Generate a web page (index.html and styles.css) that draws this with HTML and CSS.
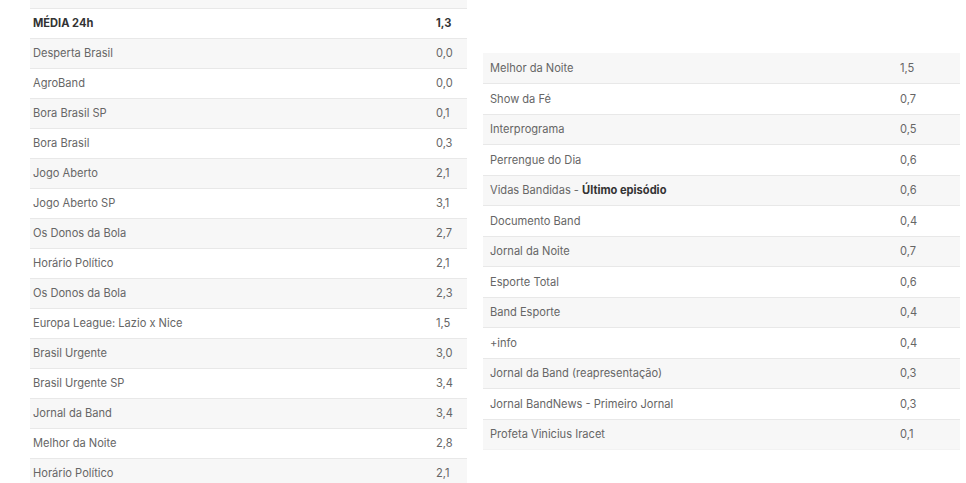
FILE: index.html
```html
<!DOCTYPE html>
<html lang="pt-BR">
<head>
<meta charset="utf-8">
<title>Audiência Band</title>
<link rel="stylesheet" href="styles.css">
</head>
<body>
<div class="page">
  <table class="ratings left">
    <tbody>
      <tr class="stub"><td></td><td></td></tr>
      <tr class="head"><td>MÉDIA 24h</td><td>1,3</td></tr>
      <tr><td>Desperta Brasil</td><td>0,0</td></tr>
      <tr><td>AgroBand</td><td>0,0</td></tr>
      <tr><td>Bora Brasil SP</td><td>0,1</td></tr>
      <tr><td>Bora Brasil</td><td>0,3</td></tr>
      <tr><td>Jogo Aberto</td><td>2,1</td></tr>
      <tr><td>Jogo Aberto SP</td><td>3,1</td></tr>
      <tr><td>Os Donos da Bola</td><td>2,7</td></tr>
      <tr><td>Horário Político</td><td>2,1</td></tr>
      <tr><td>Os Donos da Bola</td><td>2,3</td></tr>
      <tr><td>Europa League: Lazio x Nice</td><td>1,5</td></tr>
      <tr><td>Brasil Urgente</td><td>3,0</td></tr>
      <tr><td>Brasil Urgente SP</td><td>3,4</td></tr>
      <tr><td>Jornal da Band</td><td>3,4</td></tr>
      <tr><td>Melhor da Noite</td><td>2,8</td></tr>
      <tr><td>Horário Político</td><td>2,1</td></tr>
    </tbody>
  </table>
  <table class="ratings right">
    <tbody>
      <tr><td>Melhor da Noite</td><td>1,5</td></tr>
      <tr><td>Show da Fé</td><td>0,7</td></tr>
      <tr><td>Interprograma</td><td>0,5</td></tr>
      <tr><td>Perrengue do Dia</td><td>0,6</td></tr>
      <tr><td>Vidas Bandidas - <strong>Último episódio</strong></td><td>0,6</td></tr>
      <tr><td>Documento Band</td><td>0,4</td></tr>
      <tr><td>Jornal da Noite</td><td>0,7</td></tr>
      <tr><td>Esporte Total</td><td>0,6</td></tr>
      <tr><td>Band Esporte</td><td>0,4</td></tr>
      <tr><td>+info</td><td>0,4</td></tr>
      <tr><td>Jornal da Band (reapresentação)</td><td>0,3</td></tr>
      <tr><td>Jornal BandNews - Primeiro Jornal</td><td>0,3</td></tr>
      <tr><td>Profeta Vinicius Iracet</td><td>0,1</td></tr>
    </tbody>
  </table>
</div>
</body>
</html>
```

FILE: styles.css
```css
html, body {
  margin: 0;
  padding: 0;
  background: #ffffff;
}

body {
  font-family: Inter, "Noto Sans", "Liberation Sans", sans-serif;
  font-size: 11.1px;
  color: #666666;
  overflow: hidden;
  height: 483px;
}

.page {
  display: flex;
  align-items: flex-start;
  padding-left: 30px;
}

.ratings {
  border-collapse: collapse;
  table-layout: fixed;
}

.ratings td {
  border-bottom: 1px solid #e8e8e8;
  padding: 0;
  vertical-align: middle;
  white-space: nowrap;
}

.ratings strong {
  font-weight: 700;
  color: #333333;
}

/* left table */
.left {
  width: 437px;
}

.left tr {
  height: 30px;
}

.left td:first-child {
  padding-left: 3px;
  width: 403px;
}

.left tr:nth-child(odd) td {
  background: #f7f7f7;
}

.left tr.stub {
  height: 8px;
}

.left tr.stub td {
  height: 7px;
}

.left tr.head td {
  font-weight: 700;
  color: #333333;
  background: #ffffff;
}

/* right table */
.right {
  width: 477px;
  margin-top: 53px;
  margin-left: 16px;
}

.right tr {
  height: 30.5px;
}

.right td:first-child {
  padding-left: 7px;
  width: 410px;
}

.right tr:nth-child(odd) td {
  background: #f7f7f7;
}

.right tr:last-child td {
  border-bottom-color: #f2f2f2;
}
```
